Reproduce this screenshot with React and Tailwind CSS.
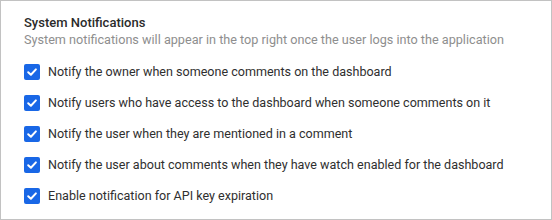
import React from "react";

const items = [
  "Notify the owner when someone comments on the dashboard",
  "Notify users who have access to the dashboard when someone comments on it",
  "Notify the user when they are mentioned in a comment",
  "Notify the user about comments when they have watch enabled for the dashboard",
  "Enable notification for API key expiration",
];

function Check() {
  return (
    <span className="flex h-4 w-4 shrink-0 items-center justify-center rounded-[2px] bg-[#1967e6]">
      <svg width="12" height="12" viewBox="0 0 12 12" fill="none">
        <path d="M2.2 6.2 L4.9 8.8 L9.9 3.4" stroke="white" strokeWidth="2" strokeLinecap="round" strokeLinejoin="round" />
      </svg>
    </span>
  );
}

export default function App() {
  return (
    <div
      className="box-border h-[220px] w-[552px] border border-[#c2c2c2] bg-white pl-[23px] pt-[14px]"
      style={{ fontFamily: "Roboto, 'Liberation Sans', sans-serif" }}
    >
      <div className="text-[13px] font-medium leading-4 text-[#2b2b2b]">System Notifications</div>
      <div className="mt-px text-[12.65px] leading-4 text-[#8e8e8e]">
        System notifications will appear in the top right once the user logs into the application
      </div>
      <div className="mt-[16px] flex flex-col gap-[15px]">
        {items.map((t) => (
          <div key={t} className="flex items-center gap-2">
            <Check />
            <span className="text-[12.55px] leading-4 text-[#2f2f2f]">{t}</span>
          </div>
        ))}
      </div>
    </div>
  );
}
